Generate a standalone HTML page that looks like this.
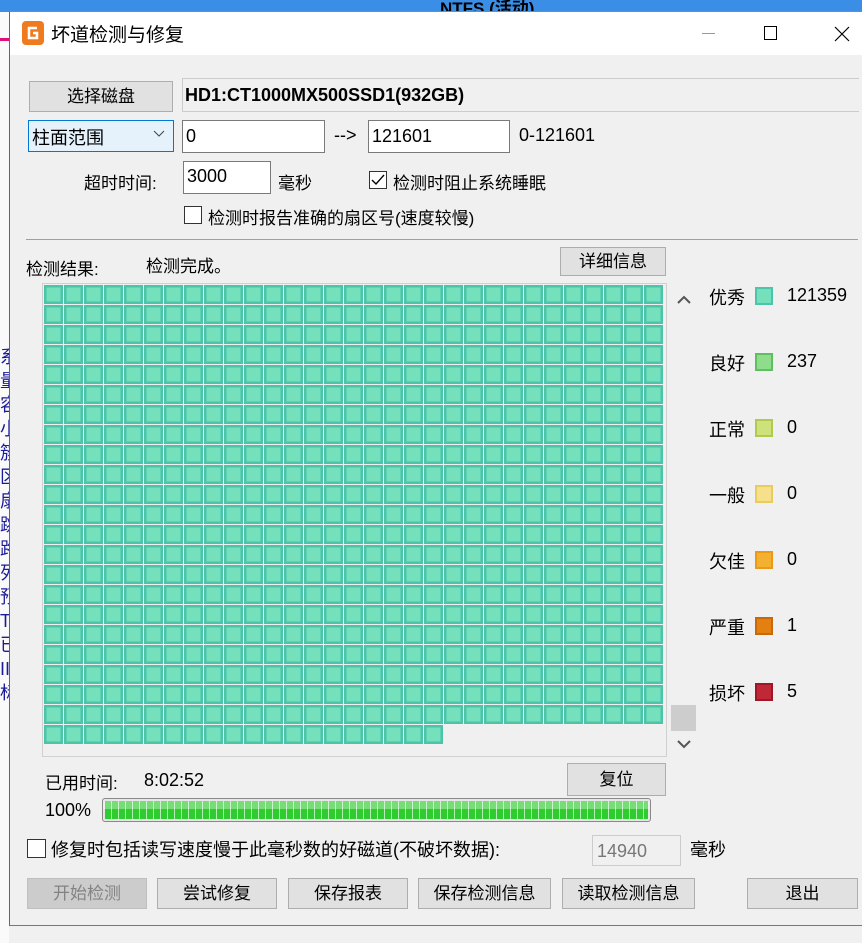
<!DOCTYPE html>
<html><head><meta charset="utf-8"><style>
*{margin:0;padding:0;box-sizing:border-box}
body{width:862px;height:931px;position:relative;overflow:hidden;background:#f0f0f0;font-family:"Liberation Sans","Noto Sans CJK SC",sans-serif;font-size:17px;color:#000}
.a{position:absolute;white-space:nowrap}
.btn{position:absolute;background:#e1e1e1;border:1px solid #adadad;text-align:center;font-size:17px}
.inp{position:absolute;background:#fff;border:1px solid #7a7a7a;padding-left:3px;font-size:18px}
.cb{position:absolute;width:18px;height:18px;border:1px solid #333;background:#fff}
.sw{position:absolute;width:18px;height:18px;left:755px}
.n{font-size:18px}
</style></head><body>
<div class="a" style="left:0;top:0;width:862px;height:12px;background:#3a8ee6"></div>
<div class="a" style="left:440px;top:-6px;font-weight:bold;font-size:17px">NTFS (活动)</div>
<div class="a" style="left:0;top:12px;width:9px;height:931px;background:#fafafa"></div>
<div class="a" style="left:0;top:38px;width:9px;height:3px;background:#e0107a"></div>
<div class="a" style="left:0;top:345px;width:9px;height:360px;color:#1a1a9a;font-size:18px;line-height:24px;white-space:normal;overflow:hidden">系<br>量<br>容<br>小<br>簇<br>区<br>扇<br>跳<br>路<br>列<br>预<br>T<br>已<br>II<br>标</div>
<!-- window -->
<div class="a" style="left:9px;top:11px;width:853px;height:915px;border-left:1px solid #666;border-top:1px solid #888;border-bottom:1px solid #777;background:#f0f0f0"></div>
<div class="a" style="left:10px;top:12px;width:852px;height:43px;background:#fff"></div>
<svg class="a" style="left:22px;top:21px" width="24" height="24"><rect x="0" y="0" width="22" height="24" rx="4" fill="#f07a20"/><path d="M15 7H7v10h8v-5h-4" stroke="#fff" stroke-width="2.5" fill="none"/></svg>
<div class="a" style="left:51px;top:20px;font-size:19px">坏道检测与修复</div>
<div class="a" style="left:702px;top:33px;width:13px;height:1px;background:#999"></div>
<div class="a" style="left:764px;top:26px;width:13px;height:14px;border:1px solid #000"></div>
<svg class="a" style="left:834px;top:26px" width="16" height="16"><path d="M1 1L15 15M15 1L1 15" stroke="#000" stroke-width="1.2"/></svg>

<div class="btn" style="left:29px;top:81px;width:144px;height:31px;line-height:29px">选择磁盘</div>
<div class="a" style="left:182px;top:78px;width:677px;height:34px;border:1px solid #ccc;border-right:none;background:#f0f0f0"></div>
<div class="a" style="left:185px;top:85px;font-weight:bold;font-size:18px">HD1:CT1000MX500SSD1(932GB)</div>
<div class="a" style="left:28px;top:120px;width:146px;height:32px;background:#e5f1fb;border:1px solid #0078d7"></div>
<div class="a" style="left:32px;top:124px;font-size:18px">柱面范围</div>
<svg class="a" style="left:153px;top:130px" width="12" height="8"><path d="M1 1L6 6L11 1" stroke="#444" fill="none"/></svg>
<div class="inp" style="left:182px;top:120px;width:143px;height:33px;line-height:31px">0</div>
<div class="a n" style="left:334px;top:125px">--&gt;</div>
<div class="inp" style="left:368px;top:120px;width:142px;height:33px;line-height:31px">121601</div>
<div class="a n" style="left:519px;top:125px">0-121601</div>
<div class="a" style="left:84px;top:169px">超时时间:</div>
<div class="inp" style="left:183px;top:161px;width:88px;height:33px;line-height:29px">3000</div>
<div class="a" style="left:278px;top:169px">毫秒</div>
<div class="cb" style="left:369px;top:171px"></div>
<svg class="a" style="left:371px;top:173px" width="14" height="14"><path d="M1 7L5 11L13 2" stroke="#000" stroke-width="1.4" fill="none"/></svg>
<div class="a" style="left:393px;top:169px">检测时阻止系统睡眠</div>
<div class="cb" style="left:184px;top:206px"></div>
<div class="a" style="left:208px;top:204px">检测时报告准确的扇区号(速度较慢)</div>
<div class="a" style="left:26px;top:239px;width:832px;height:1px;background:#a0a0a0"></div>
<div class="a" style="left:26px;top:255px">检测结果:</div>
<div class="a" style="left:146px;top:252px">检测完成。</div>
<div class="btn" style="left:560px;top:247px;width:106px;height:29px;line-height:27px">详细信息</div>

<div class="a" style="left:42px;top:283px;width:625px;height:474px;border:1px solid #d0d0d0;background:#f0f0f0"></div>
<svg class="a" style="left:44px;top:285px" width="620" height="460">
<defs><pattern id="p" x="0" y="0" width="20" height="20" patternUnits="userSpaceOnUse"><rect x="1.25" y="1.25" width="16.5" height="16.5" fill="#74e0bc" stroke="#4cc4aa" stroke-width="2.5"/></pattern></defs>
<rect x="0" y="0" width="620" height="440" fill="url(#p)"/>
<rect x="0" y="440" width="400" height="20" fill="url(#p)"/>
</svg>
<svg class="a" style="left:677px;top:295px" width="14" height="10"><path d="M1 8L7 2L13 8" stroke="#555" stroke-width="2" fill="none"/></svg>
<div class="a" style="left:671px;top:705px;width:25px;height:26px;background:#cdcdcd"></div>
<svg class="a" style="left:677px;top:739px" width="14" height="10"><path d="M1 2L7 8L13 2" stroke="#555" stroke-width="2" fill="none"/></svg>

<div class="a" style="left:709px;top:284px;font-size:18px">优秀</div><div class="sw" style="top:287px;background:#74e0bc;border:2px solid #4cc4aa"></div><div class="a n" style="left:787px;top:285px">121359</div>
<div class="a" style="left:709px;top:350px;font-size:18px">良好</div><div class="sw" style="top:353px;background:#8fdc8c;border:2px solid #5cc060"></div><div class="a n" style="left:787px;top:351px">237</div>
<div class="a" style="left:709px;top:416px;font-size:18px">正常</div><div class="sw" style="top:419px;background:#cde27a;border:2px solid #b0ca50"></div><div class="a n" style="left:787px;top:417px">0</div>
<div class="a" style="left:709px;top:482px;font-size:18px">一般</div><div class="sw" style="top:485px;background:#f6e08c;border:2px solid #e8cc60"></div><div class="a n" style="left:787px;top:483px">0</div>
<div class="a" style="left:709px;top:548px;font-size:18px">欠佳</div><div class="sw" style="top:551px;background:#f4b030;border:2px solid #e89a18"></div><div class="a n" style="left:787px;top:549px">0</div>
<div class="a" style="left:709px;top:614px;font-size:18px">严重</div><div class="sw" style="top:617px;background:#e48010;border:2px solid #c86808"></div><div class="a n" style="left:787px;top:615px">1</div>
<div class="a" style="left:709px;top:680px;font-size:18px">损坏</div><div class="sw" style="top:683px;background:#c02838;border:2px solid #a01828"></div><div class="a n" style="left:787px;top:681px">5</div>

<div class="a" style="left:45px;top:769px">已用时间:</div>
<div class="a n" style="left:144px;top:770px">8:02:52</div>
<div class="btn" style="left:567px;top:763px;width:99px;height:33px;line-height:31px">复位</div>
<div class="a n" style="left:45px;top:800px">100%</div>
<div class="a" style="left:102px;top:798px;width:549px;height:24px;border:1px solid #888;border-radius:3px;padding:2px;background:#e6e6e6">
<div style="width:100%;height:100%;background:repeating-linear-gradient(90deg,#2ecc2e 0 6px,#b6ecb6 6px 7px),#2ecc2e"></div></div>
<div class="a" style="left:103px;top:801px;width:547px;height:8px;background:rgba(255,255,255,.35)"></div>
<div class="cb" style="left:27px;top:839px;width:19px;height:19px"></div>
<div class="a" style="left:51px;top:836px;font-size:18px">修复时包括读写速度慢于此毫秒数的好磁道(不破坏数据):</div>
<div class="a" style="left:592px;top:835px;width:89px;height:31px;border:1px solid #ccc;background:#f0f0f0;color:#777;padding-left:4px;line-height:30px;font-size:18px">14940</div>
<div class="a" style="left:690px;top:836px;font-size:18px">毫秒</div>

<div class="btn" style="left:27px;top:878px;width:120px;height:31px;line-height:29px;background:#cccccc;border-color:#bfbfbf;color:#838383">开始检测</div>
<div class="btn" style="left:157px;top:878px;width:120px;height:31px;line-height:29px">尝试修复</div>
<div class="btn" style="left:288px;top:878px;width:120px;height:31px;line-height:29px">保存报表</div>
<div class="btn" style="left:418px;top:878px;width:133px;height:31px;line-height:29px">保存检测信息</div>
<div class="btn" style="left:562px;top:878px;width:133px;height:31px;line-height:29px">读取检测信息</div>
<div class="btn" style="left:747px;top:878px;width:111px;height:31px;line-height:29px">退出</div>
</body></html>
